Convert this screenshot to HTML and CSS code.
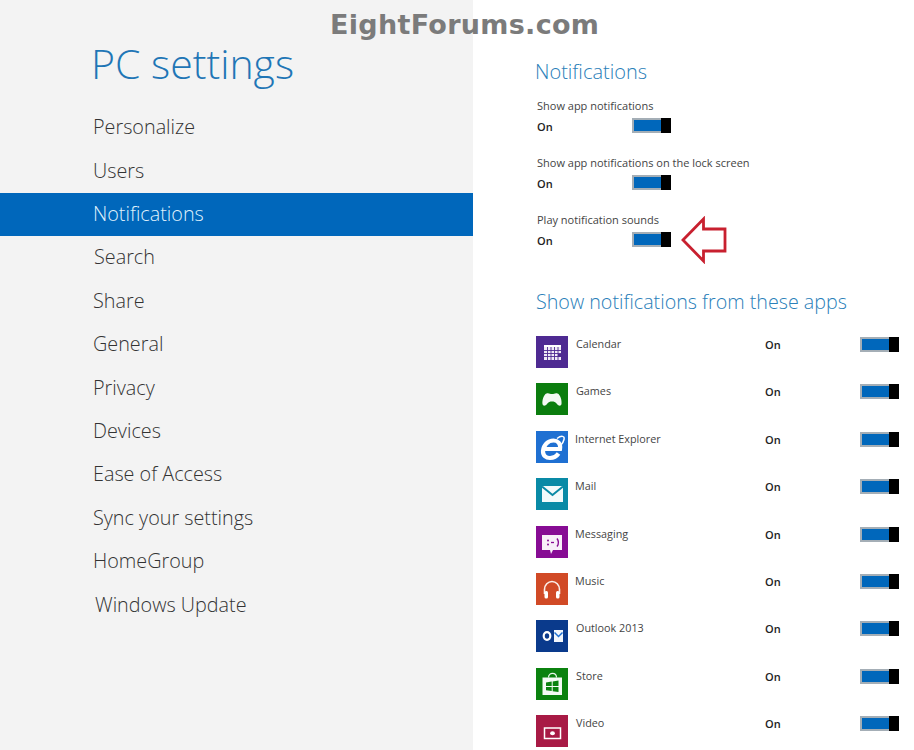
FILE: index.html
```html
<!DOCTYPE html>
<html lang="en">
<head>
<meta charset="utf-8">
<title>PC settings</title>
<link rel="stylesheet" href="styles.css">
</head>
<body>
<div class="page">
  <aside class="side">
    <h1 class="title">PC settings</h1>
    <nav class="nav">
      <div class="nav-item">Personalize</div>
      <div class="nav-item">Users</div>
      <div class="nav-item active">Notifications</div>
      <div class="nav-item shift1">Search</div>
      <div class="nav-item">Share</div>
      <div class="nav-item">General</div>
      <div class="nav-item">Privacy</div>
      <div class="nav-item">Devices</div>
      <div class="nav-item">Ease of Access</div>
      <div class="nav-item">Sync your settings</div>
      <div class="nav-item">HomeGroup</div>
      <div class="nav-item shift2">Windows Update</div>
    </nav>
  </aside>
  <main class="main">
    <h2 class="h-small">Notifications</h2>
    <section class="setting">
      <div class="setting-label">Show app notifications</div>
      <div class="setting-row"><span class="on">On</span><span class="toggle"><i class="fill"></i><i class="thumb"></i></span></div>
    </section>
    <section class="setting">
      <div class="setting-label">Show app notifications on the lock screen</div>
      <div class="setting-row"><span class="on">On</span><span class="toggle"><i class="fill"></i><i class="thumb"></i></span></div>
    </section>
    <section class="setting">
      <div class="setting-label">Play notification sounds</div>
      <div class="setting-row"><span class="on">On</span><span class="toggle"><i class="fill"></i><i class="thumb"></i></span>
        <svg class="arrow" width="48" height="48" viewBox="0 0 48 48"><path d="M3 24 L23.500 3 V13 H45 V35 H23.500 V45 Z" fill="#fff" stroke="#c8202f" stroke-width="2.800" stroke-linejoin="miter"/></svg>
      </div>
    </section>
    <h2 class="h-large">Show notifications from these apps</h2>
    <div class="apps">
      <div class="app">
        <svg class="icon" viewBox="0 0 32 32"><rect width="32" height="32" fill="#4e2a92"/><rect x="8" y="11" width="17" height="13" fill="#efeaf6"/><path d="M8 14.500H25M8 17.500H25M8 20.500H25M11.500 11V24M15 11V24M18.500 11V24M22 11V24" stroke="#4e2a92" stroke-width=".9"/><rect x="8" y="9" width="17" height="2" fill="#fff"/><rect x="22" y="18" width="3" height="3" fill="#4e2a92"/></svg>
        <span class="app-name">Calendar</span><span class="on">On</span><span class="toggle"><i class="fill"></i><i class="thumb"></i></span>
      </div>
      <div class="app">
        <svg class="icon" viewBox="0 0 32 32"><rect width="32" height="32" fill="#0b7d0e"/><path d="M10.500 10.500C12.500 9.500 14 11 16 11S19.500 9.500 21.500 10.500C24.500 11.500 26 18 25.500 21 25 23.500 22.500 23 21 21 19.500 19 18 18.500 16 18.500S12.500 19 11 21C9.500 23 7 23.500 6.500 21 6 18 7.500 11.500 10.500 10.500Z" fill="#f4f9f4"/></svg>
        <span class="app-name">Games</span><span class="on">On</span><span class="toggle"><i class="fill"></i><i class="thumb"></i></span>
      </div>
      <div class="app nudge">
        <svg class="icon" viewBox="0 0 32 32"><rect width="32" height="32" fill="#1f70d2"/><path d="M8.500 18H24C25 12.500 21.500 9.500 17.500 9.500 12 9.500 7.500 14 7 20 6.800 24.500 10 27 14 27 17.500 27 20.500 25.500 22.500 22.500" fill="none" stroke="#fff" stroke-width="4.200"/><path d="M21 7.500C25 4.500 29 4.500 28 8.500 27.500 10.500 26.500 12.500 25 14" fill="none" stroke="#fff" stroke-width="1.500"/></svg>
        <span class="app-name">Internet Explorer</span><span class="on">On</span><span class="toggle"><i class="fill"></i><i class="thumb"></i></span>
      </div>
      <div class="app nudge">
        <svg class="icon" viewBox="0 0 32 32"><rect width="32" height="32" fill="#098aa6"/><rect x="6" y="8" width="21" height="16" fill="#f2fafb"/><path d="M6 8.500L16.500 17 27 8.500" fill="none" stroke="#098aa6" stroke-width="2"/></svg>
        <span class="app-name">Mail</span><span class="on">On</span><span class="toggle"><i class="fill"></i><i class="thumb"></i></span>
      </div>
      <div class="app nudge">
        <svg class="icon" viewBox="0 0 32 32"><rect width="32" height="32" fill="#870c94"/><path d="M6 9H26V24H17L15 28 14 24H6Z" fill="#f8eff9"/><circle cx="12" cy="14.500" r="1" fill="#870c94"/><circle cx="12" cy="18.500" r="1" fill="#870c94"/><path d="M15 16.500H18" stroke="#870c94" stroke-width="1.300"/><path d="M21 12.500C22.800 15 22.800 18 21 20.500" fill="none" stroke="#870c94" stroke-width="1.400"/></svg>
        <span class="app-name">Messaging</span><span class="on">On</span><span class="toggle"><i class="fill"></i><i class="thumb"></i></span>
      </div>
      <div class="app nudge">
        <svg class="icon" viewBox="0 0 32 32"><rect width="32" height="32" fill="#d14a26"/><path d="M8.500 21V16.500C8.500 12 12 8.500 16 8.500S23.500 12 23.500 16.500V21" fill="none" stroke="#fbeee9" stroke-width="1.600"/><rect x="8.500" y="18" width="3.500" height="7.500" rx="1.500" fill="#fff"/><rect x="20" y="18" width="3.500" height="7.500" rx="1.500" fill="#fff"/></svg>
        <span class="app-name">Music</span><span class="on">On</span><span class="toggle"><i class="fill"></i><i class="thumb"></i></span>
      </div>
      <div class="app">
        <svg class="icon" viewBox="0 0 32 32"><rect width="32" height="32" fill="#0a3a8c"/><ellipse cx="11" cy="16" rx="3.300" ry="3.800" fill="none" stroke="#fff" stroke-width="2.200"/><rect x="18" y="10" width="9" height="12" fill="#f2f6fc"/><path d="M18.500 12.500L22.500 16.500 26.500 12.500" fill="none" stroke="#1f70d2" stroke-width="1.500"/></svg>
        <span class="app-name">Outlook 2013</span><span class="on">On</span><span class="toggle"><i class="fill"></i><i class="thumb"></i></span>
      </div>
      <div class="app">
        <svg class="icon" viewBox="0 0 32 32"><rect width="32" height="32" fill="#0b820f"/><path d="M12.500 9.500C12.500 4 20.500 4 20.500 9.500" fill="none" stroke="#e9f5e9" stroke-width="1.200"/><path d="M6.500 9.500H26V27H6.500Z" fill="#f5fbf5"/><path d="M10 14.500L15.700 13.600V18H10ZM16.700 13.400L22.500 12.500V18H16.700ZM10 19H15.700V23L10 22.300ZM16.700 19H22.500V24L16.700 23.200Z" fill="#0b820f"/></svg>
        <span class="app-name">Store</span><span class="on">On</span><span class="toggle"><i class="fill"></i><i class="thumb"></i></span>
      </div>
      <div class="app">
        <svg class="icon" viewBox="0 0 32 32"><rect width="32" height="32" fill="#a81a45"/><rect x="8.500" y="13" width="16" height="10.500" fill="none" stroke="#fff" stroke-width="1.500"/><ellipse cx="16.500" cy="18.200" rx="2.400" ry="2" fill="#fff"/></svg>
        <span class="app-name">Video</span><span class="on">On</span><span class="toggle"><i class="fill"></i><i class="thumb"></i></span>
      </div>
    </div>
  </main>
  <div class="watermark">EightForums.com</div>
</div>
</body>
</html>
```
FILE: styles.css
```css
* { box-sizing: border-box; }
html, body { margin: 0; padding: 0; background: #fff; }
.page {
  position: relative;
  display: flex;
  width: 914px;
  height: 750px;
  overflow: hidden;
  font-family: "Open Sans", "Liberation Sans", sans-serif;
}
.side {
  flex: 0 0 473px;
  background: #f3f3f3;
  padding-top: 34px;
}
.title {
  margin: 0 0 0 91px;
  height: 72.300px;
  font-size: 41px;
  line-height: 58px;
  font-weight: 300;
  color: #1f76b6;
}
.nav-item {
  height: 43.400px;
  line-height: 41px;
  padding-left: 93px;
  font-size: 19.800px;
  font-weight: 300;
  color: #333;
}
.nav-item.active { background: #0067bb; color: #dff0fb; }
.nav-item.shift1 { padding-left: 94px; }
.nav-item.shift2 { padding-left: 95px; }
.main {
  flex: 1;
  padding: 58px 0 0 62px;
  min-width: 0;
}
.h-small {
  margin: 0 0 12px;
  font-size: 20px;
  line-height: 28px;
  font-weight: 300;
  color: #2a80b9;
}
.h-large {
  margin: 18px 0 19px 1px;
  font-size: 19.700px;
  line-height: 30px;
  font-weight: 300;
  color: #2a80b9;
  white-space: nowrap;
}
.setting { height: 57px; padding-left: 2px; }
.setting-label {
  font-size: 11px;
  line-height: 16px;
  color: #444;
}
.setting-row {
  position: relative;
  display: flex;
  align-items: center;
  margin-top: 5px;
  height: 16px;
}
.setting-row .on { width: 95px; }
.setting-row .toggle { margin-top: -3px; }
.on {
  font-size: 11px;
  font-weight: 600;
  color: #222;
  line-height: 16px;
}
.toggle {
  display: block;
  flex: none;
  position: relative;
  width: 39px;
  height: 15px;
  border: 2px solid #a4aeb6;
  border-right: 0;
  background: #0067bb;
}
.fill { display: block; }
.thumb {
  position: absolute;
  top: -2px;
  bottom: -2px;
  right: 0;
  width: 10px;
  background: #000;
}
.arrow {
  position: absolute;
  left: 143px;
  top: -17px;
}
.apps { margin-left: 1px; }
.app {
  display: grid;
  grid-template-columns: 32px 197px 95px 39px;
  height: 47.400px;
  align-items: start;
}
.icon { display: block; width: 32px; height: 32px; }
.app-name {
  padding-left: 8px;
  font-size: 10.800px;
  line-height: 16px;
  color: #444;
}
.app.nudge .app-name { padding-left: 7px; }
.app .on { margin-top: 1px; }
.app .toggle { margin-top: 1px; }
.watermark {
  position: absolute;
  left: 330px;
  top: 8px;
  font-family: "DejaVu Sans", sans-serif;
  font-weight: 700;
  font-size: 27px;
  line-height: 34px;
  letter-spacing: 0.300px;
  color: #7b7b7b;
  white-space: nowrap;
}
```
